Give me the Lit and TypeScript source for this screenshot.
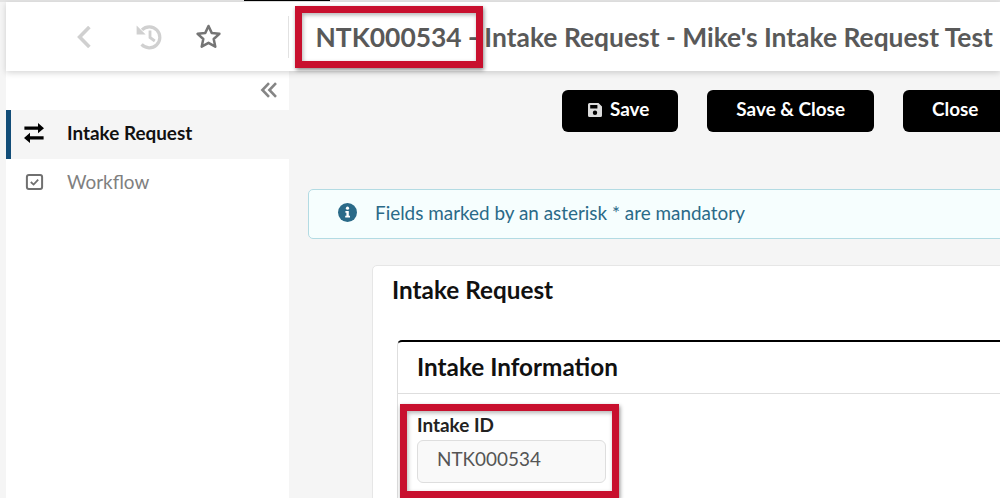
// app.ts
// Intake request record page with highlighted callouts

import { LitElement, html, css, svg } from 'lit';
import { customElement } from 'lit/decorators.js';

const backIcon = svg`<svg width="14" height="22" viewBox="0 0 14 22"><path d="M12.4 1 L2.6 11 L12.4 21" fill="none" stroke="#d0d0d0" stroke-width="3.6"/></svg>`;

const historyIcon = svg`<svg width="26" height="26" viewBox="0 0 26 26" fill="none" stroke="#d0d0d0" stroke-width="3.2">
  <path d="M6 5.8 A10.5 10.5 0 1 1 5.6 20.4"/>
  <path d="M0.6 1.4 V10.4 H9.6 Z" fill="#d0d0d0" stroke="none"/>
  <path d="M14 6.5 V13.5 L18.8 17" stroke-width="2.8"/>
</svg>`;

const starIcon = svg`<svg width="25" height="25" viewBox="0 0 25 25"><path d="M12.5 2 L15.7 8.9 L23.4 9.8 L17.7 15 L19.3 22.7 L12.5 18.8 L5.7 22.7 L7.3 15 L1.6 9.8 L9.3 8.9 Z" fill="none" stroke="#757575" stroke-width="2.5" stroke-linejoin="round"/></svg>`;

const collapseIcon = svg`<svg width="18" height="16" viewBox="0 0 18 16"><path d="M9 1.2 L2.4 8 L9 14.8 M16 1.2 L9.4 8 L16 14.8" fill="none" stroke="#858585" stroke-width="2.6"/></svg>`;

const swapIcon = svg`<svg width="20" height="20" viewBox="0 0 20 20" fill="#000">
  <path d="M0.4 3.6 H14 V0 L20 5.2 L14 10.2 V6.8 H0.4 Z"/>
  <path d="M19.6 13.2 H6 V9.8 L0 14.9 L6 20 V16.4 H19.6 Z"/>
</svg>`;

const checkIcon = svg`<svg width="20" height="20" viewBox="0 0 20 20" fill="none" stroke="#707070">
  <rect x="2.9" y="2.9" width="15.2" height="14.2" rx="2" stroke-width="2"/>
  <path d="M6.8 10 L9.6 12.6 L14.2 7.6" stroke-width="1.8"/>
</svg>`;

const saveIcon = svg`<svg width="14" height="14" viewBox="0 0 14 14"><path fill-rule="evenodd" fill="#dcdcdc" d="M1.5 0 H10.5 L14 3.5 V12.5 A1.5 1.5 0 0 1 12.5 14 H1.5 A1.5 1.5 0 0 1 0 12.5 V1.5 A1.5 1.5 0 0 1 1.5 0 Z M2.2 2 V5.4 H9.4 V2 Z M7 7.6 A2.2 2.2 0 1 0 7 12 A2.2 2.2 0 1 0 7 7.6 Z"/></svg>`;

const infoIcon = svg`<svg width="19" height="19" viewBox="0 0 19 19">
  <circle cx="9.5" cy="9.5" r="9.5" fill="#2a6a88"/>
  <circle cx="9.5" cy="5.2" r="1.6" fill="#fff"/>
  <path d="M7.4 8 H10.8 V12.8 H12 V14.6 H7.2 V12.8 H8.4 V9.8 H7.4 Z" fill="#fff"/>
</svg>`;

@customElement('app-root')
export class AppRoot extends LitElement {
  static styles = css`
    :host {
      display: block;
      position: relative;
      width: 1000px;
      height: 498px;
      overflow: hidden;
      background: #f5f5f5;
      font-family: Lato, 'Liberation Sans', sans-serif;
      font-size: 18.9px;
      color: #111;
    }

    .top-strip {
      height: 2px;
      background: #e4e4e4;
      display: flex;
    }

    .top-strip i {
      display: block;
      width: 86px;
      height: 1px;
      margin-left: 244px;
      background: #000;
    }

    .shell {
      margin-left: 6px;
      height: 496px;
      display: flex;
      flex-direction: column;
    }

    .header {
      position: relative;
      z-index: 2;
      flex: none;
      height: 69px;
      background: #fff;
      display: flex;
      align-items: center;
      box-shadow: 0 2px 6px rgba(0, 0, 0, 0.16);
    }

    .nav-icons {
      width: 282px;
      height: 42px;
      flex: none;
      display: flex;
      align-items: center;
      border-right: 1px solid #e2e2e2;
    }

    .nav-icons span {
      display: block;
    }

    .nav-icons svg {
      display: block;
    }

    .nav-icons .back { margin-left: 71px; }
    .nav-icons .history { margin-left: 45px; }
    .nav-icons .star { margin-left: 34px; }

    .title {
      margin-left: 26.5px;
      font-size: 26.42px;
      font-weight: 700;
      color: #595959;
      white-space: nowrap;
    }

    .body {
      flex: 1;
      min-height: 0;
      display: flex;
    }

    .sidebar {
      flex: none;
      width: 283px;
      background: #fff;
    }

    .collapse {
      height: 39px;
      box-sizing: border-box;
      padding: 0 11px 2px 0;
      display: flex;
      justify-content: flex-end;
      align-items: center;
    }

    .nav-item {
      height: 49px;
      box-sizing: border-box;
      display: flex;
      align-items: center;
      gap: 23px;
      padding: 0 0 3px 18px;
      color: #808080;
    }

    .nav-item span {
      margin-bottom: 2px;
    }

    .nav-item svg {
      display: block;
      flex: none;
    }

    .nav-item.active {
      background: #f5f5f5;
      color: #111;
      font-weight: 700;
      padding-left: 13px;
      border-left: 5px solid #124d78;
    }

    .main {
      flex: 1;
      min-width: 0;
      padding: 19px 0 0 19px;
      overflow: hidden;
    }

    .toolbar {
      display: flex;
      gap: 29px;
      padding-left: 254px;
    }

    .btn {
      flex: none;
      height: 42px;
      box-sizing: border-box;
      padding: 0 29px 4px;
      background: #000;
      color: #fff;
      font-weight: 700;
      border-radius: 6px;
      display: flex;
      align-items: center;
      gap: 8px;
    }

    .btn span {
      margin-bottom: 1px;
    }

    .btn.save {
      padding-left: 26px;
      padding-bottom: 3px;
    }

    .btn.save span {
      margin-bottom: 2px;
    }

    .btn svg {
      display: block;
    }

    .alert {
      margin: 57px -20px 0 0;
      height: 50px;
      box-sizing: border-box;
      display: flex;
      align-items: center;
      gap: 18px;
      padding: 0 0 3px 29px;
      background: #f6fefe;
      border: 1px solid #b3dbe3;
      border-radius: 5px;
      color: #2a6a88;
    }

    .alert span {
      margin-bottom: 1px;
    }

    .alert svg {
      display: block;
    }

    .card {
      margin: 26px -20px 0 64px;
      height: 300px;
      padding: 0 0 0 24px;
      background: #fff;
      border: 1px solid #e6e6e6;
      border-radius: 5px;
    }

    h2 {
      margin: 0;
      font-size: 24.3px;
      font-weight: 700;
      color: #111;
    }

    .card > h2 {
      margin: 10px 0 1px -5px;
      line-height: 28px;
    }

    .inner {
      margin-top: 36px;
      border: 1px solid #dedede;
      border-top: 2px solid #000;
      border-radius: 5px 0 0 0;
      height: 200px;
    }

    .inner-head {
      height: 51px;
      padding: 0 0 0 19px;
      display: flex;
      align-items: center;
      border-bottom: 1px solid #dedede;
    }

    .inner-head h2 {
      margin-bottom: 2px;
    }

    .field {
      padding: 20px 0 0 19px;
    }

    label {
      display: block;
      font-weight: 700;
      color: #222;
      line-height: 22px;
    }

    .input {
      margin-top: 4px;
      width: 189px;
      height: 43px;
      box-sizing: border-box;
      padding: 0 0 7px 19px;
      display: flex;
      align-items: center;
      background: #f9f9f9;
      border: 1px solid #dedede;
      border-radius: 6px;
      color: #555;
    }

    /* callouts lie over the page */
    .callout {
      position: absolute;
      z-index: 5;
      box-sizing: border-box;
      border: 7px solid #c8102e;
      box-shadow: 1px 2px 4px rgba(0, 0, 0, 0.45), inset 1px 2px 4px rgba(0, 0, 0, 0.3);
      pointer-events: none;
    }

    .callout.title-box {
      left: 295px;
      top: 6px;
      width: 188px;
      height: 62px;
    }

    .callout.field-box {
      left: 400px;
      top: 404px;
      width: 219px;
      height: 94px;
    }
  `;

  render() {
    return html`
      <div class="top-strip"><i></i></div>
      <div class="shell">
        <div class="header">
          <div class="nav-icons">
            <span class="back">${backIcon}</span>
            <span class="history">${historyIcon}</span>
            <span class="star">${starIcon}</span>
          </div>
          <div class="title">NTK000534 - Intake Request - Mike's Intake Request Test</div>
        </div>
        <div class="body">
          <div class="sidebar">
            <div class="collapse">${collapseIcon}</div>
            <div class="nav-item active">${swapIcon}<span>Intake Request</span></div>
            <div class="nav-item">${checkIcon}<span>Workflow</span></div>
          </div>
          <div class="main">
            <div class="toolbar">
              <div class="btn save">${saveIcon}<span>Save</span></div>
              <div class="btn"><span>Save &amp; Close</span></div>
              <div class="btn"><span>Close</span></div>
            </div>
            <div class="alert">${infoIcon}<span>Fields marked by an asterisk * are mandatory</span></div>
            <div class="card">
              <h2>Intake Request</h2>
              <div class="inner">
                <div class="inner-head"><h2>Intake Information</h2></div>
                <div class="field">
                  <label>Intake ID</label>
                  <div class="input">NTK000534</div>
                </div>
              </div>
            </div>
          </div>
        </div>
      </div>
      <div class="callout title-box"></div>
      <div class="callout field-box"></div>
    `;
  }
}
